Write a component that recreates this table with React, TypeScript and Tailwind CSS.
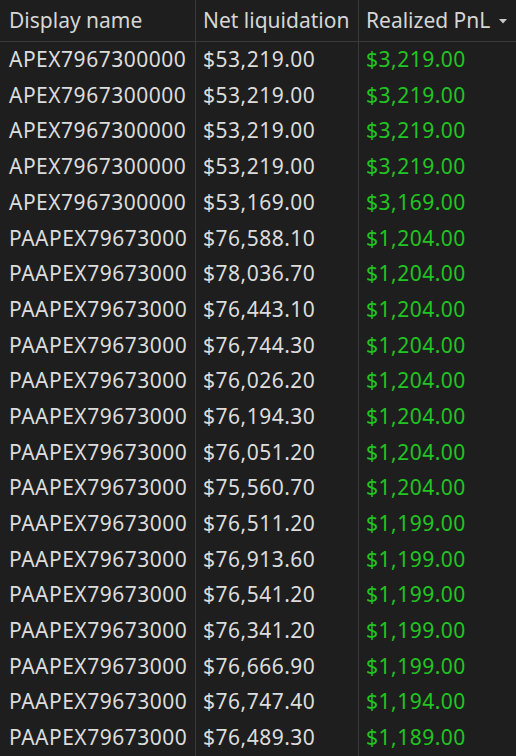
import React from "react";

const rows: [string, string, string][] = [
  ["APEX7967300000", "$53,219.00", "$3,219.00"],
  ["APEX7967300000", "$53,219.00", "$3,219.00"],
  ["APEX7967300000", "$53,219.00", "$3,219.00"],
  ["APEX7967300000", "$53,219.00", "$3,219.00"],
  ["APEX7967300000", "$53,169.00", "$3,169.00"],
  ["PAAPEX79673000", "$76,588.10", "$1,204.00"],
  ["PAAPEX79673000", "$78,036.70", "$1,204.00"],
  ["PAAPEX79673000", "$76,443.10", "$1,204.00"],
  ["PAAPEX79673000", "$76,744.30", "$1,204.00"],
  ["PAAPEX79673000", "$76,026.20", "$1,204.00"],
  ["PAAPEX79673000", "$76,194.30", "$1,204.00"],
  ["PAAPEX79673000", "$76,051.20", "$1,204.00"],
  ["PAAPEX79673000", "$75,560.70", "$1,204.00"],
  ["PAAPEX79673000", "$76,511.20", "$1,199.00"],
  ["PAAPEX79673000", "$76,913.60", "$1,199.00"],
  ["PAAPEX79673000", "$76,541.20", "$1,199.00"],
  ["PAAPEX79673000", "$76,341.20", "$1,199.00"],
  ["PAAPEX79673000", "$76,666.90", "$1,199.00"],
  ["PAAPEX79673000", "$76,747.40", "$1,194.00"],
  ["PAAPEX79673000", "$76,489.30", "$1,189.00"],
];

export default function App() {
  return (
    <div
      className="w-[516px] h-[756px] overflow-hidden bg-[#1e1e1e] text-[21px]"
      style={{ fontFamily: '"Noto Sans", "Open Sans", sans-serif' }}
    >
      <div className="grid grid-cols-[196px_163px_157px]">
        <div className="h-[42px] flex items-center pl-[9px] border-r border-b border-[#3a3a3a] text-[#d6d6d6] whitespace-nowrap">
          Display name
        </div>
        <div className="h-[42px] flex items-center pl-[7px] border-r border-b border-[#3a3a3a] text-[#d6d6d6] whitespace-nowrap">
          Net liquidation
        </div>
        <div className="h-[42px] flex items-center pl-[7px] pr-[9px] border-b border-[#3a3a3a] text-[#d6d6d6] justify-between whitespace-nowrap">
          <span>Realized PnL</span>
          <svg width="8" height="5" viewBox="0 0 8 5" className="mt-[1px]">
            <path d="M0 0 L8 0 L4 4.5 Z" fill="#c8c8c8" />
          </svg>
        </div>
        {rows.map((r, i) => (
          <React.Fragment key={i}>
            <div className="h-[35.7px] flex items-center pl-[9px] border-r border-[#3a3a3a] text-[#dcdcdc] whitespace-nowrap tracking-[0.5px]">
              {r[0]}
            </div>
            <div className="h-[35.7px] flex items-center pl-[7px] border-r border-[#3a3a3a] text-[#dcdcdc] whitespace-nowrap tracking-[0.5px]">
              {r[1]}
            </div>
            <div className="h-[35.7px] flex items-center pl-[7px] text-[#22c422] whitespace-nowrap tracking-[0.5px]">
              {r[2]}
            </div>
          </React.Fragment>
        ))}
      </div>
    </div>
  );
}
